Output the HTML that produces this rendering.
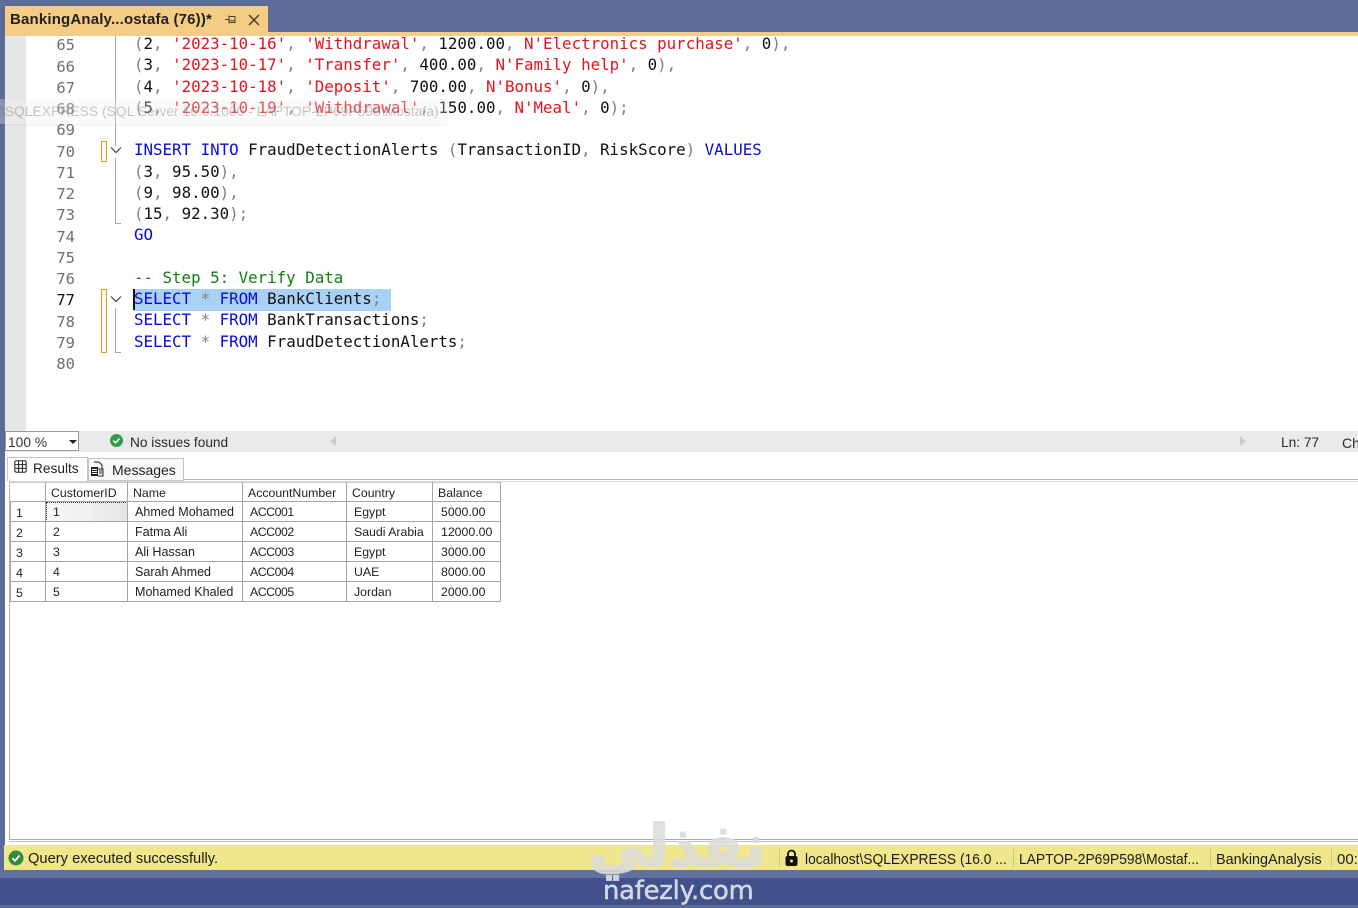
<!DOCTYPE html>
<html><head><meta charset="utf-8">
<style>
html,body{margin:0;padding:0}
body{width:1358px;height:905px;overflow:hidden;position:relative;background:#5d6b99;font-family:"Liberation Sans",sans-serif;color:#1a1a1a}
div,span.a,svg{position:absolute}
.l{left:134px;height:21px;line-height:21px;font-family:"DejaVu Sans Mono","Liberation Mono",monospace;font-size:15.8px;white-space:pre;color:#111}
.n{left:40px;width:35px;text-align:right;height:21px;line-height:21px;font-family:"DejaVu Sans Mono","Liberation Mono",monospace;font-size:15.5px;color:#6f6f6f}
.r{color:#e3131b}.k{color:#0a0ae0}.g{color:#808080}.c{color:#0f7f0f}
.t{font-size:12.3px;line-height:20px;height:20px;white-space:nowrap;color:#222}
.nm{font-size:12.55px}
.ac{letter-spacing:-.45px}
.vl{background:#a3a7ac;width:1px}
.hl{background:#a3a7ac;height:1px}
.s{font-size:15px;line-height:24px;height:24px;white-space:nowrap;color:#1c1c10;transform-origin:0 50%}
.sep{width:1px;background:#c8c48a;top:849px;height:18px}
</style></head><body>
<div style="left:5px;top:36px;width:1353px;height:834px;background:#fff"></div>
<div style="left:5px;top:36px;width:21px;height:395px;background:#e6e7e8"></div>
<!-- tab -->
<div style="left:5px;top:6px;width:263px;height:26px;background:#f5cc84"></div>
<div style="left:5px;top:32px;width:1353px;height:4px;background:#f5cc84"></div>
<div style="left:10px;top:9px;height:22px;line-height:22px;font-size:15px;font-weight:bold;color:#222;white-space:nowrap;letter-spacing:.17px">BankingAnaly...ostafa (76))*</div>
<svg style="left:224px;top:13px" width="14" height="14" viewBox="0 0 14 14"><path d="M1 6.500h4M5 2.500v8M5 3.500h6v6H5M5 7.800h6" fill="none" stroke="#4a4028" stroke-width="1"/></svg>
<svg style="left:247px;top:13px" width="14" height="14" viewBox="0 0 14 14"><path d="M2 2l10 10M12 2L2 12" fill="none" stroke="#4a4028" stroke-width="1.500"/></svg>

<!-- line numbers -->
<div class="n" style="top:35px">65</div>
<div class="n" style="top:57px">66</div>
<div class="n" style="top:78px">67</div>
<div class="n" style="top:99px">68</div>
<div class="n" style="top:120px">69</div>
<div class="n" style="top:142px">70</div>
<div class="n" style="top:163px">71</div>
<div class="n" style="top:184px">72</div>
<div class="n" style="top:205px">73</div>
<div class="n" style="top:227px">74</div>
<div class="n" style="top:248px">75</div>
<div class="n" style="top:269px">76</div>
<div class="n" style="top:290px;color:#111">77</div>
<div class="n" style="top:312px">78</div>
<div class="n" style="top:333px">79</div>
<div class="n" style="top:354px">80</div>

<!-- outline lines and markers -->
<div class="vl" style="left:115px;top:36px;height:110px"></div>
<div class="vl" style="left:115px;top:158px;height:65px"></div>
<div class="hl" style="left:115px;top:223px;width:6px"></div>
<div class="vl" style="left:115px;top:308px;height:44px"></div>
<div class="hl" style="left:115px;top:352px;width:6px"></div>
<div style="left:101px;top:141px;width:4px;height:19px;border:1px solid #c9a81e;background:#fdfbef"></div>
<div style="left:101px;top:289px;width:4px;height:62px;border:1px solid #c9a81e;background:#fdfbef"></div>
<svg style="left:110px;top:146px" width="12" height="9" viewBox="0 0 12 9"><path d="M1 1.500l5 5 5-5" fill="none" stroke="#444" stroke-width="1.200"/></svg>
<svg style="left:110px;top:295px" width="12" height="9" viewBox="0 0 12 9"><path d="M1 1.500l5 5 5-5" fill="none" stroke="#444" stroke-width="1.200"/></svg>

<!-- selection -->
<div style="left:134px;top:289px;width:257px;height:22px;background:#a9d0f5"></div>
<div style="left:133px;top:289px;width:2px;height:21px;background:#111"></div>

<!-- code -->
<div class="l" style="top:33px"><span class="g">(</span>2<span class="g">,</span> <span class="r">'2023-10-16'</span><span class="g">,</span> <span class="r">'Withdrawal'</span><span class="g">,</span> 1200.00<span class="g">,</span> <span class="r">N'Electronics purchase'</span><span class="g">,</span> 0<span class="g">),</span></div>
<div class="l" style="top:54px"><span class="g">(</span>3<span class="g">,</span> <span class="r">'2023-10-17'</span><span class="g">,</span> <span class="r">'Transfer'</span><span class="g">,</span> 400.00<span class="g">,</span> <span class="r">N'Family help'</span><span class="g">,</span> 0<span class="g">),</span></div>
<div class="l" style="top:76px"><span class="g">(</span>4<span class="g">,</span> <span class="r">'2023-10-18'</span><span class="g">,</span> <span class="r">'Deposit'</span><span class="g">,</span> 700.00<span class="g">,</span> <span class="r">N'Bonus'</span><span class="g">,</span> 0<span class="g">),</span></div>
<div class="l" style="top:97px"><span class="g">(</span>5<span class="g">,</span> <span class="r">'2023-10-19'</span><span class="g">,</span> <span class="r">'Withdrawal'</span><span class="g">,</span> 150.00<span class="g">,</span> <span class="r">N'Meal'</span><span class="g">,</span> 0<span class="g">);</span></div>
<div class="l" style="top:139px"><span class="k">INSERT INTO</span> FraudDetectionAlerts <span class="g">(</span>TransactionID<span class="g">,</span> RiskScore<span class="g">)</span> <span class="k">VALUES</span></div>
<div class="l" style="top:161px"><span class="g">(</span>3<span class="g">,</span> 95.50<span class="g">),</span></div>
<div class="l" style="top:182px"><span class="g">(</span>9<span class="g">,</span> 98.00<span class="g">),</span></div>
<div class="l" style="top:203px"><span class="g">(</span>15<span class="g">,</span> 92.30<span class="g">);</span></div>
<div class="l" style="top:224px"><span class="k">GO</span></div>
<div class="l" style="top:267px"><span class="c">-- Step 5: Verify Data</span></div>
<div class="l" style="top:288px"><span class="k">SELECT</span> <span class="g">*</span> <span class="k">FROM</span> BankClients<span class="g">;</span></div>
<div class="l" style="top:309px"><span class="k">SELECT</span> <span class="g">*</span> <span class="k">FROM</span> BankTransactions<span class="g">;</span></div>
<div class="l" style="top:331px"><span class="k">SELECT</span> <span class="g">*</span> <span class="k">FROM</span> FraudDetectionAlerts<span class="g">;</span></div>

<!-- fading tooltip -->
<div style="left:0;top:99px;width:447px;height:25px;background:rgba(238,238,238,.3);box-shadow:0 1px 2px rgba(0,0,0,.08)"></div>
<div style="left:-3px;top:101px;height:20px;line-height:20px;font-size:13.9px;color:rgba(110,110,110,.38);white-space:nowrap">t\SQLEXPRESS (SQL Server 16.0.1000 - LAPTOP-2P69P598\Mostafa)</div>

<!-- editor bottom bar -->
<div style="left:5px;top:431px;width:72px;height:18px;background:#fff;border:1px solid #9a9a9a;z-index:1"></div>
<div style="left:5px;top:431px;width:1353px;height:21px;background:#e9eaeb"></div>
<div style="left:8px;top:433px;height:20px;line-height:20px;font-size:13.8px;color:#333;z-index:2">100 %</div>
<div style="left:69px;top:440px;width:0;height:0;border-left:4px solid transparent;border-right:4px solid transparent;border-top:4px solid #222;z-index:2"></div>
<svg style="left:109px;top:433px" width="15" height="15" viewBox="0 0 15 15"><circle cx="7.500" cy="7.500" r="6.500" fill="#2f9e44"/><path d="M4.300 7.600l2.200 2.200 4-4.200" fill="none" stroke="#fff" stroke-width="1.500"/></svg>
<div style="left:130px;top:433px;height:20px;line-height:20px;font-size:13.7px;color:#2a2a2a;white-space:nowrap">No issues found</div>
<div style="left:330px;top:436px;width:0;height:0;border-top:5px solid transparent;border-bottom:5px solid transparent;border-right:6px solid #c9cacc"></div>
<div style="left:1240px;top:436px;width:0;height:0;border-top:5px solid transparent;border-bottom:5px solid transparent;border-left:6px solid #c9cacc"></div>
<div style="left:1281px;top:433px;height:20px;line-height:20px;font-size:13.7px;color:#2a2a2a;white-space:nowrap">Ln: 77</div>
<div style="left:1342px;top:433px;height:20px;line-height:20px;font-size:14px;color:#2a2a2a;white-space:nowrap">Ch</div>

<!-- results tabs -->
<div class="hl" style="left:183px;top:479px;width:1175px;background:#b5b5b5"></div>
<div class="hl" style="left:9px;top:481px;width:1349px;background:#d8d8d8"></div>
<div class="vl" style="left:9px;top:481px;height:359px;background:#b5b5b5"></div>
<div style="left:7px;top:457px;width:81px;height:24px;background:#fff;border:1px solid #c4c4c4;border-bottom:0;box-sizing:border-box"></div>
<div style="left:88px;top:458px;width:96px;height:23px;background:#f8f8f8;border:1px solid #c4c4c4;box-sizing:border-box"></div>
<svg style="left:14px;top:460px" width="13" height="13" viewBox="0 0 13 13"><path d="M2.500.8h8q1.700 0 1.700 1.700v8q0 1.700-1.700 1.700h-8q-1.700 0-1.700-1.700v-8Q.8.8 2.500.8zM.8 4.600h11.400M.8 8.400h11.400M4.600.8v11.400M8.400.8v11.400" fill="none" stroke="#222" stroke-width="1"/></svg>
<div style="left:33px;top:459px;height:20px;line-height:20px;font-size:13.7px;color:#222">Results</div>
<svg style="left:90px;top:461px" width="15" height="16" viewBox="0 0 15 16"><path d="M4 1h5l3 3v4" fill="none" stroke="#222" stroke-width="1"/><rect x="1" y="6" width="7" height="9" fill="#222"/><path d="M2 8.500h5M2 10.500h5M2 12.500h5" stroke="#fff" stroke-width="1"/><path d="M8 8h5v7H8" fill="none" stroke="#222"/><path d="M9 10h3M9 12h3" stroke="#222"/></svg>
<div style="left:112px;top:460px;height:20px;line-height:20px;font-size:14px;color:#222">Messages</div>

<!-- grid -->
<div style="left:46px;top:502px;width:81px;height:19px;background:linear-gradient(90deg,#f5f7f8,#eff1f3 50%,#e2e4e6)"></div>
<div style="left:46px;top:502px;width:80px;height:18px;border:1px dotted #333"></div>
<div class="hl" style="left:9px;top:482px;width:492px;background:#c9c9c9"></div>
<div class="vl" style="left:10px;top:501px;height:101px"></div>
<div class="vl" style="left:45px;top:482px;height:120px"></div>
<div class="vl" style="left:127px;top:482px;height:120px"></div>
<div class="vl" style="left:242px;top:482px;height:120px"></div>
<div class="vl" style="left:346px;top:482px;height:120px"></div>
<div class="vl" style="left:432px;top:482px;height:120px"></div>
<div class="vl" style="left:500px;top:482px;height:120px"></div>
<div class="hl" style="left:10px;top:501px;width:491px"></div>
<div class="hl" style="left:10px;top:521px;width:491px"></div>
<div class="hl" style="left:10px;top:541px;width:491px"></div>
<div class="hl" style="left:10px;top:561px;width:491px"></div>
<div class="hl" style="left:10px;top:581px;width:491px"></div>
<div class="hl" style="left:10px;top:601px;width:491px"></div>

<div class="t" style="left:51px;top:483px">CustomerID</div>
<div class="t" style="left:133px;top:483px">Name</div>
<div class="t" style="left:248px;top:483px">AccountNumber</div>
<div class="t" style="left:352px;top:483px">Country</div>
<div class="t" style="left:438px;top:483px">Balance</div>

<div class="t" style="left:16px;top:503px">1</div><div class="t" style="left:53px;top:502px">1</div><div class="t nm" style="left:135px;top:502px">Ahmed Mohamed</div><div class="t ac" style="left:250px;top:502px">ACC001</div><div class="t" style="left:354px;top:502px">Egypt</div><div class="t" style="left:441px;top:502px">5000.00</div>
<div class="t" style="left:16px;top:523px">2</div><div class="t" style="left:53px;top:522px">2</div><div class="t nm" style="left:135px;top:522px">Fatma Ali</div><div class="t ac" style="left:250px;top:522px">ACC002</div><div class="t" style="left:354px;top:522px">Saudi Arabia</div><div class="t" style="left:441px;top:522px">12000.00</div>
<div class="t" style="left:16px;top:543px">3</div><div class="t" style="left:53px;top:542px">3</div><div class="t nm" style="left:135px;top:542px">Ali Hassan</div><div class="t ac" style="left:250px;top:542px">ACC003</div><div class="t" style="left:354px;top:542px">Egypt</div><div class="t" style="left:441px;top:542px">3000.00</div>
<div class="t" style="left:16px;top:563px">4</div><div class="t" style="left:53px;top:562px">4</div><div class="t nm" style="left:135px;top:562px">Sarah Ahmed</div><div class="t ac" style="left:250px;top:562px">ACC004</div><div class="t" style="left:354px;top:562px">UAE</div><div class="t" style="left:441px;top:562px">8000.00</div>
<div class="t" style="left:16px;top:583px">5</div><div class="t" style="left:53px;top:582px">5</div><div class="t nm" style="left:135px;top:582px">Mohamed Khaled</div><div class="t ac" style="left:250px;top:582px">ACC005</div><div class="t" style="left:354px;top:582px">Jordan</div><div class="t" style="left:441px;top:582px">2000.00</div>

<!-- pane bottom -->
<div class="hl" style="left:9px;top:839px;width:1349px;background:#a8a8a8"></div>
<div class="hl" style="left:9px;top:841px;width:1349px;background:#c0c0c0"></div>

<!-- status bar -->
<div style="left:4px;top:845px;width:1354px;height:25px;background:#f0e68c"></div>
<div style="left:0;top:870px;width:1358px;height:8px;background:#62709f"></div>
<div style="left:0;top:878px;width:1358px;height:27px;background:#41518c"></div>
<svg style="left:8px;top:850px" width="16" height="16" viewBox="0 0 16 16"><circle cx="8" cy="8" r="7.500" fill="#2f8f3f"/><path d="M4.500 8.200l2.500 2.600 4.500-5.300" fill="none" stroke="#fff" stroke-width="1.800"/></svg>
<div class="s" style="left:28px;top:847px;transform:scaleX(.98)">Query executed successfully.</div>
<div class="sep" style="left:779px"></div>
<div class="sep" style="left:1013px"></div>
<div class="sep" style="left:1210px"></div>
<div class="sep" style="left:1331px"></div>
<svg style="left:784px;top:849px" width="15" height="18" viewBox="0 0 15 18"><path d="M4 8V5a3.500 3.500 0 0 1 7 0v3" fill="none" stroke="#111" stroke-width="1.800"/><rect x="1.500" y="7" width="12" height="10" rx="2" fill="#111"/><circle cx="7.500" cy="12" r="1.500" fill="#f0e68c"/></svg>
<div class="s" style="left:805px;top:848px;transform:scaleX(.92)">localhost\SQLEXPRESS (16.0 ...</div>
<div class="s" style="left:1019px;top:848px;transform:scaleX(.92)">LAPTOP-2P69P598\Mostaf...</div>
<div class="s" style="left:1216px;top:848px;transform:scaleX(.96)">BankingAnalysis</div>
<div class="s" style="left:1337px;top:848px">00:00:00</div>

<!-- watermark -->
<div style="left:600px;top:806px;width:166px;height:80px;line-height:80px;text-align:center;font-family:'DejaVu Sans',sans-serif;font-weight:bold;font-size:58px;color:rgba(220,220,216,.85);-webkit-text-stroke:2px rgba(220,220,216,.85);white-space:nowrap;direction:rtl">نفذلي</div>
<div style="left:603px;top:874px;height:34px;line-height:34px;font-family:'DejaVu Sans',sans-serif;font-size:25.800px;letter-spacing:-.2px;color:#d4d8e2;-webkit-text-stroke:.5px #d4d8e2;white-space:nowrap">nafezly.com</div>
</body></html>
